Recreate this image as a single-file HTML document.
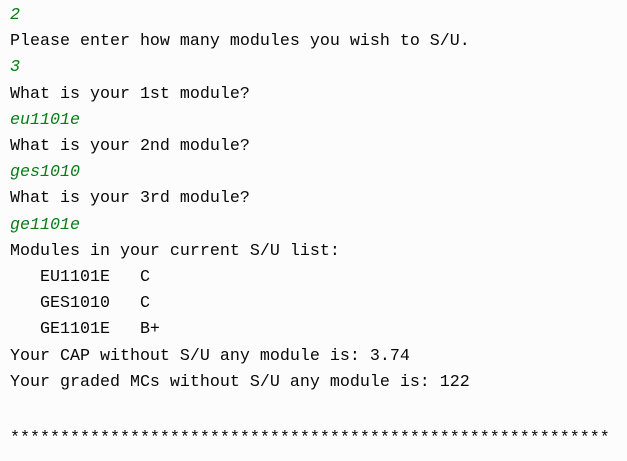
<!DOCTYPE html>
<html><head><style>
html,body{margin:0;padding:0;background:#fcfcfc;width:627px;height:461px;overflow:hidden}
pre{margin:0;padding:3px 0 0 10px;font-family:"Liberation Mono",monospace;font-size:16.67px;line-height:26.2px;color:#080808}
i{color:#067d17}
.s{display:block;margin-top:4px}
</style></head><body><pre><i>2</i>
Please enter how many modules you wish to S/U.
<i>3</i>
What is your 1st module?
<i>eu1101e</i>
What is your 2nd module?
<i>ges1010</i>
What is your 3rd module?
<i>ge1101e</i>
Modules in your current S/U list:
   EU1101E   C
   GES1010   C
   GE1101E   B+
Your CAP without S/U any module is: 3.74
Your graded MCs without S/U any module is: 122

<span class="s">************************************************************</span></pre></body></html>
